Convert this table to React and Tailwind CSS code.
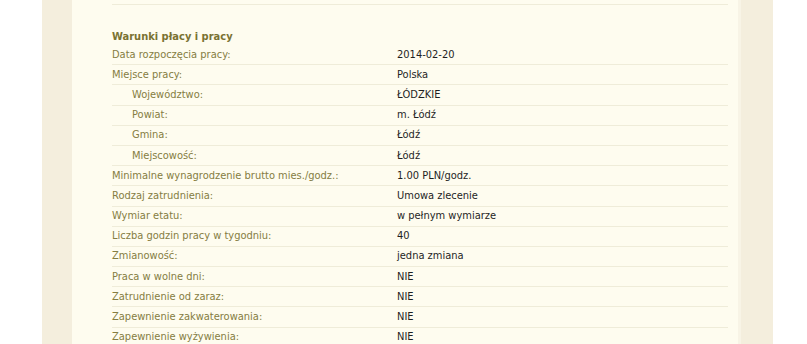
const rows = [
  { label: 'Data rozpoczęcia pracy:', value: '2014-02-20' },
  { label: 'Miejsce pracy:', value: 'Polska' },
  { label: 'Województwo:', value: 'ŁÓDZKIE', indent: true },
  { label: 'Powiat:', value: 'm. Łódź', indent: true },
  { label: 'Gmina:', value: 'Łódź', indent: true },
  { label: 'Miejscowość:', value: 'Łódź', indent: true },
  { label: 'Minimalne wynagrodzenie brutto mies./godz.:', value: '1.00 PLN/godz.' },
  { label: 'Rodzaj zatrudnienia:', value: 'Umowa zlecenie' },
  { label: 'Wymiar etatu:', value: 'w pełnym wymiarze' },
  { label: 'Liczba godzin pracy w tygodniu:', value: '40' },
  { label: 'Zmianowość:', value: 'jedna zmiana' },
  { label: 'Praca w wolne dni:', value: 'NIE' },
  { label: 'Zatrudnienie od zaraz:', value: 'NIE' },
  { label: 'Zapewnienie zakwaterowania:', value: 'NIE' },
  { label: 'Zapewnienie wyżywienia:', value: 'NIE' },
];

function Row({ label, value, indent }) {
  return (
    <div className="flex h-[20.2px] items-center border-b border-[#efecd9]">
      <div className={`w-[285px] shrink-0 text-[#857d42] ${indent ? 'pl-[20px]' : ''}`}>{label}</div>
      <div className="text-[#1f1f1f]">{value}</div>
    </div>
  );
}

export default function App() {
  return (
    <div className="h-[344px] w-[807px] overflow-hidden bg-white" style={{ fontFamily: '"DejaVu Sans Condensed", "DejaVu Sans", sans-serif' }}>
      <div className="ml-[42px] flex h-full w-[731px] bg-[#f4eedd]">
        <div className="ml-[30px] h-full w-[666px] bg-[#fefcef] pl-[40px] pr-[10px] text-[11px] leading-[14px]">
          <div className="-mt-[15px]">
            <div className="flex h-[20px] items-center border-b border-[#efecd9]">
              <div className="w-[285px] shrink-0 text-[#857d42]">Opis pracy:</div>
            </div>
            <h3 className="mt-[25px] mb-[1px] font-bold text-[#7a7232] h-[14px]">Warunki płacy i pracy</h3>
            {rows.map((r) => (
              <Row key={r.label} {...r} />
            ))}
          </div>
        </div>
        <div className="h-full w-[3px] bg-[#f8f4e6]" />
      </div>
    </div>
  );
}
